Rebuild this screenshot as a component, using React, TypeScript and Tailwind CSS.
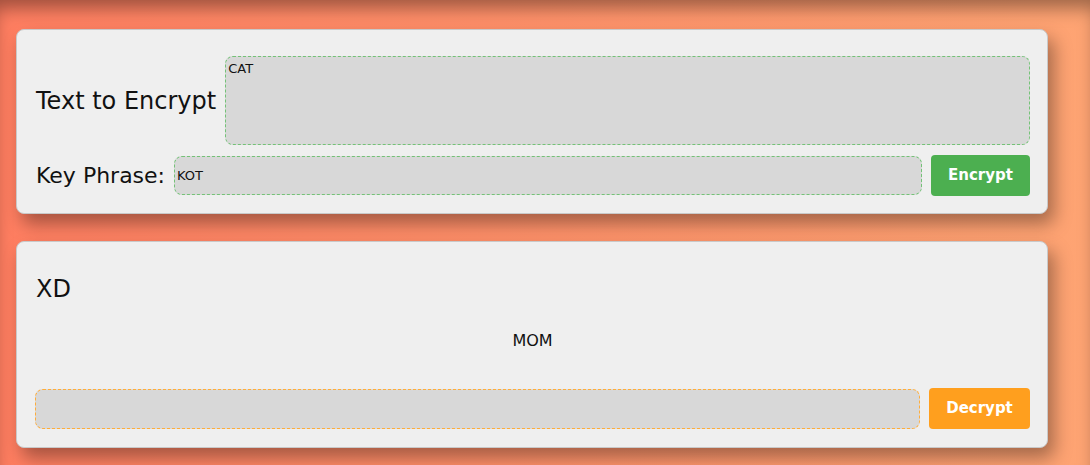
import { useState } from 'react';

const font = { fontFamily: '"Comic Sans MS", "DejaVu Sans", sans-serif' };

export default function App() {
  const [text, setText] = useState('CAT');
  const [key, setKey] = useState('KOT');
  const [cipher, setCipher] = useState('');

  return (
    <div
      className="min-h-screen bg-gradient-to-r from-[#ff7e61] to-[#fea473] shadow-[inset_0_14px_18px_-6px_rgba(0,0,0,0.38)] pl-4 pr-[42px] pt-[29px] pb-4 flex flex-col gap-[27px] text-[#111]"
      style={font}
    >
      {/* Encrypt card */}
      <div className="bg-[#efefef] border border-[#c9c9c9] rounded-lg shadow-[6px_10px_18px_rgba(0,0,0,0.35)] pl-[19px] pr-[17px] pt-[26px] pb-[17px] flex flex-col gap-[10px]">
        <div className="flex items-center gap-[9px]">
          <label className="text-[24px] whitespace-nowrap">Text to Encrypt</label>
          <textarea
            value={text}
            onChange={(e) => setText(e.target.value)}
            className="flex-1 h-[89px] resize-none bg-[#d8d8d8] border border-dashed border-[#74c277] rounded-lg px-[2px] py-[4px] text-[13px] leading-4 outline-none"
            style={font}
          />
        </div>
        <div className="flex items-center gap-[9px]">
          <label className="text-[22px] whitespace-nowrap">Key Phrase:</label>
          <input
            value={key}
            onChange={(e) => setKey(e.target.value)}
            className="flex-1 h-[39px] bg-[#d8d8d8] border border-dashed border-[#74c277] rounded-lg px-[2px] text-[13px] outline-none"
            style={font}
          />
          <button className="w-[99px] h-[41px] bg-[#4caf50] rounded text-white font-bold text-[15px]" style={font}>
            Encrypt
          </button>
        </div>
      </div>

      {/* Decrypt card */}
      <div className="bg-[#efefef] border border-[#c9c9c9] rounded-lg shadow-[6px_10px_18px_rgba(0,0,0,0.35)] pl-[18px] pr-[17px] pt-[29px] pb-[18px] flex flex-col">
        <div className="pl-[1px] text-[24px] leading-[36px]">XD</div>
        <div className="text-center text-[16px] leading-6 mt-[22px]">MOM</div>
        <div className="flex items-center gap-[9px] mt-[35px]">
          <input
            value={cipher}
            onChange={(e) => setCipher(e.target.value)}
            className="flex-1 h-[40px] bg-[#d8d8d8] border border-dashed border-[#ffad3a] rounded-lg px-[2px] text-[13px] outline-none"
            style={font}
          />
          <button className="w-[101px] h-[41px] bg-[#ff9f1e] rounded text-white font-bold text-[15px]" style={font}>
            Decrypt
          </button>
        </div>
      </div>
    </div>
  );
}
